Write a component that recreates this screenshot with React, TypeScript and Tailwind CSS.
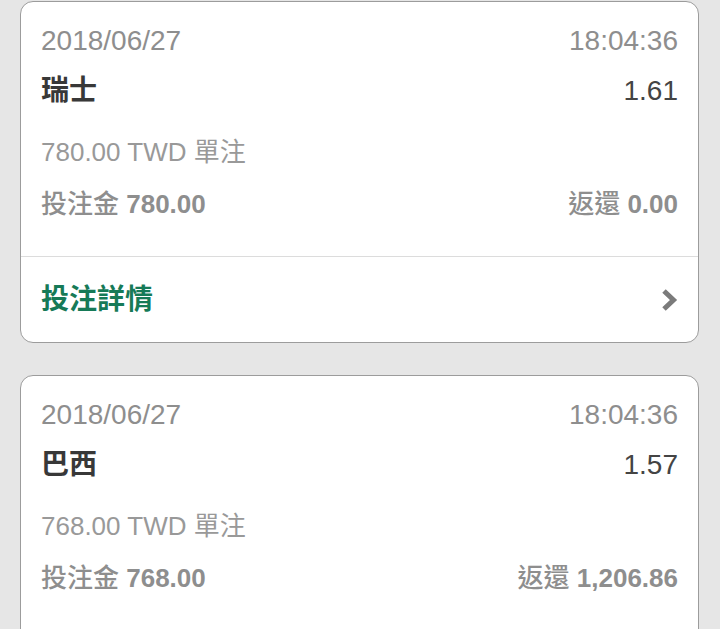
const bets = [
  { date: '2018/06/27', time: '18:04:36', team: '瑞士', odds: '1.61', stake: '780.00', ret: '0.00' },
  { date: '2018/06/27', time: '18:04:36', team: '巴西', odds: '1.57', stake: '768.00', ret: '1,206.86' },
];

type Bet = (typeof bets)[number];

function Chevron() {
  return (
    <svg width="20" height="26" viewBox="0 0 20 26" className="shrink-0">
      <path d="M5 4 L14.5 13 L5 22" fill="none" stroke="#7b7b7b" strokeWidth="5" strokeLinejoin="miter" />
    </svg>
  );
}

function BetCard({ bet }: { bet: Bet }) {
  return (
    <div className="bg-white rounded-[13px] border-[1.5px] border-[#9c9c9c] overflow-hidden">
      <div className="px-5 pt-[15px]">
        {/* Date + time */}
        <div className="flex items-center justify-between h-[48px] text-[28px] text-[#8e8e8e]">
          <span>{bet.date}</span>
          <span>{bet.time}</span>
        </div>

        {/* Selection + odds */}
        <div className="flex items-center justify-between h-[52px] text-[28px]">
          <span className="font-bold text-[#383838]">{bet.team}</span>
          <span className="text-[#444]">{bet.odds}</span>
        </div>

        <div className="flex items-center h-[70px] text-[26px] text-[#999]">
          {bet.stake} TWD 單注
        </div>

        {/* Stake + return */}
        <div className="flex items-center justify-between h-[34px] mb-[35px] text-[26px] text-[#8e8e8e]">
          <span className="font-medium">投注金 <b>{bet.stake}</b></span>
          <span className="font-medium">返還 <b>{bet.ret}</b></span>
        </div>
      </div>

      <div className="border-t-[1.5px] border-[#dcdcdc] flex items-center justify-between h-[86px] pl-5 pr-[19px]">
        <span className="text-[28px] font-bold text-[#167a57]">投注詳情</span>
        <Chevron />
      </div>
    </div>
  );
}

export default function App() {
  return (
    <div className="h-[629px] overflow-hidden bg-[#e6e6e6] pl-5 pr-[21px] pt-px flex flex-col gap-[32px] font-['Liberation_Sans','Noto_Sans_CJK_TC',sans-serif]">
      {bets.map((b, i) => (
        <div key={i} className="shrink-0">
          <BetCard bet={b} />
        </div>
      ))}
    </div>
  );
}
